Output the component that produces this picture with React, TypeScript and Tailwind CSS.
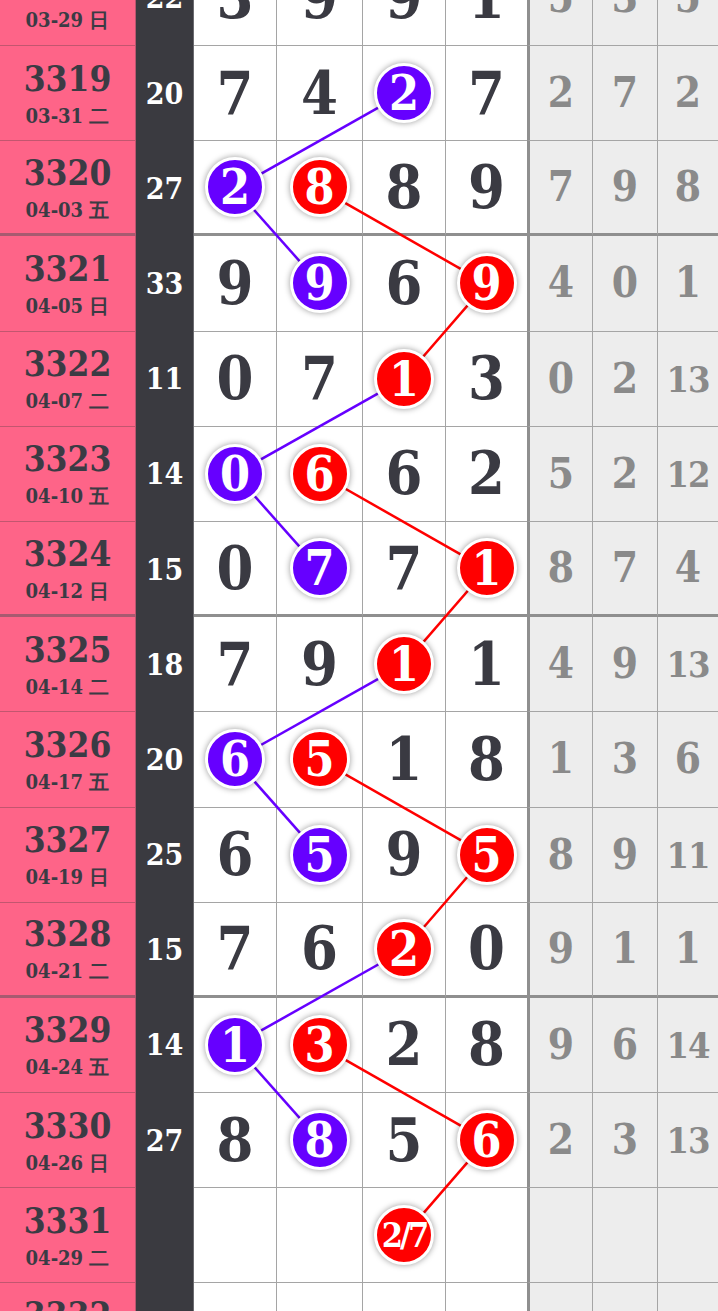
type Row = {
  id: string
  date: string
  sum: string
  d: string[]
  g: string[]
  balls?: Record<number, 'b' | 'r'>
}

const rows: Row[] = [
  { id: '3318', date: '03-29 日', sum: '22', d: ['3', '9', '9', '1'], g: ['5', '3', '5'] },
  { id: '3319', date: '03-31 二', sum: '20', d: ['7', '4', '2', '7'], g: ['2', '7', '2'], balls: { 2: 'b' } },
  { id: '3320', date: '04-03 五', sum: '27', d: ['2', '8', '8', '9'], g: ['7', '9', '8'], balls: { 0: 'b', 1: 'r' } },
  { id: '3321', date: '04-05 日', sum: '33', d: ['9', '9', '6', '9'], g: ['4', '0', '1'], balls: { 1: 'b', 3: 'r' } },
  { id: '3322', date: '04-07 二', sum: '11', d: ['0', '7', '1', '3'], g: ['0', '2', '13'], balls: { 2: 'r' } },
  { id: '3323', date: '04-10 五', sum: '14', d: ['0', '6', '6', '2'], g: ['5', '2', '12'], balls: { 0: 'b', 1: 'r' } },
  { id: '3324', date: '04-12 日', sum: '15', d: ['0', '7', '7', '1'], g: ['8', '7', '4'], balls: { 1: 'b', 3: 'r' } },
  { id: '3325', date: '04-14 二', sum: '18', d: ['7', '9', '1', '1'], g: ['4', '9', '13'], balls: { 2: 'r' } },
  { id: '3326', date: '04-17 五', sum: '20', d: ['6', '5', '1', '8'], g: ['1', '3', '6'], balls: { 0: 'b', 1: 'r' } },
  { id: '3327', date: '04-19 日', sum: '25', d: ['6', '5', '9', '5'], g: ['8', '9', '11'], balls: { 1: 'b', 3: 'r' } },
  { id: '3328', date: '04-21 二', sum: '15', d: ['7', '6', '2', '0'], g: ['9', '1', '1'], balls: { 2: 'r' } },
  { id: '3329', date: '04-24 五', sum: '14', d: ['1', '3', '2', '8'], g: ['9', '6', '14'], balls: { 0: 'b', 1: 'r' } },
  { id: '3330', date: '04-26 日', sum: '27', d: ['8', '8', '5', '6'], g: ['2', '3', '13'], balls: { 1: 'b', 3: 'r' } },
  { id: '3331', date: '04-29 二', sum: '', d: ['', '', '2/7', ''], g: ['', '', ''], balls: { 2: 'r' } },
  { id: '3332', date: '05-01 四', sum: '', d: ['', '', '', ''], g: ['', '', ''] },
]

const ROW_H = 95.2
const colX = [235, 319.5, 404, 486.5]

// [row, col] pairs joined by a line
const blueLinks = [
  [1, 2, 2, 0], [2, 0, 3, 1], [4, 2, 5, 0], [5, 0, 6, 1],
  [7, 2, 8, 0], [8, 0, 9, 1], [10, 2, 11, 0], [11, 0, 12, 1],
]
const redLinks = [
  [2, 1, 3, 3], [3, 3, 4, 2], [5, 1, 6, 3], [6, 3, 7, 2],
  [8, 1, 9, 3], [9, 3, 10, 2], [11, 1, 12, 3], [12, 3, 13, 2],
]

const cellW = ['w-[83px] border-r', 'w-[86px] border-r', 'w-[83px] border-r', 'w-[81px]']
const grayW = ['w-[66px] border-l-[3px] border-l-[#8f8f8f] border-r', 'w-[65px] border-r', 'w-[60px]']

function Ball({ v, kind }: { v: string; kind: 'b' | 'r' }) {
  const small = v.length > 1
  return (
    <span
      className={`relative z-20 flex h-[60px] w-[60px] items-center justify-center rounded-full border-[3px] border-white text-white shadow-[0_0_6px_rgba(0,0,0,0.4)] ${
        kind === 'b' ? 'bg-[#6600ff]' : 'bg-[#ff0000]'
      } ${small ? 'text-[34px] tracking-[-3px]' : 'text-[48px]'}`}
    >
      {v}
    </span>
  )
}

export default function App() {
  return (
    <div className="h-[1311px] w-[718px] overflow-hidden bg-white font-['DejaVu_Serif_Condensed','DejaVu_Serif',serif] font-bold">
      <div className="relative mt-[-49.2px]">
        {rows.map((r) => {
          const thick = Number(r.id) % 4 === 0
          const bb = thick ? 'border-b-[3px]' : 'border-b'
          return (
            <div key={r.id} className="flex h-[95.2px]">
              <div
                className={`flex w-[136px] flex-col items-center justify-center border-r border-r-[#b9566e] bg-[#fe6488] text-[#3b3b44] ${bb} ${
                  thick ? 'border-b-[#a85a70]' : 'border-b-[#c2566f]'
                }`}
              >
                <span className="text-[35px] leading-none">{r.id}</span>
                <span className="mt-[10px] text-[20px] leading-none">{r.date}</span>
              </div>
              <div className="flex w-[58px] items-center justify-center border-r border-r-[#6b6b70] bg-[#3a3a40] text-[30px] leading-none text-white">
                {r.sum}
              </div>
              {r.d.map((v, i) => {
                const kind = r.balls?.[i]
                return (
                  <div
                    key={i}
                    className={`flex items-center justify-center border-[#a5a5a5] ${cellW[i]} ${bb} ${
                      thick ? 'border-b-[#8f8f8f]' : ''
                    } text-[59px] leading-none text-[#3a3a42]`}
                  >
                    {kind ? <Ball v={v} kind={kind} /> : v}
                  </div>
                )
              })}
              {r.g.map((v, i) => (
                <div
                  key={i}
                  className={`flex items-center justify-center border-[#a5a5a5] bg-[#ededed] ${grayW[i]} ${bb} ${
                    thick ? 'border-b-[#8f8f8f]' : ''
                  } leading-none text-[#8a8a8a] ${v.length > 1 ? 'text-[36px] tracking-[-1px]' : 'text-[42px]'}`}
                >
                  {v}
                </div>
              ))}
            </div>
          )
        })}
        <svg className="pointer-events-none absolute inset-0 z-10 h-full w-full">
          {blueLinks.map(([r1, c1, r2, c2], i) => (
            <line
              key={'b' + i}
              x1={colX[c1]}
              y1={r1 * ROW_H + 47}
              x2={colX[c2]}
              y2={r2 * ROW_H + 47}
              stroke="#6600ff"
              strokeWidth={2.5}
            />
          ))}
          {redLinks.map(([r1, c1, r2, c2], i) => (
            <line
              key={'r' + i}
              x1={colX[c1]}
              y1={r1 * ROW_H + 47}
              x2={colX[c2]}
              y2={r2 * ROW_H + 47}
              stroke="#ff0000"
              strokeWidth={2.5}
            />
          ))}
        </svg>
      </div>
    </div>
  )
}
